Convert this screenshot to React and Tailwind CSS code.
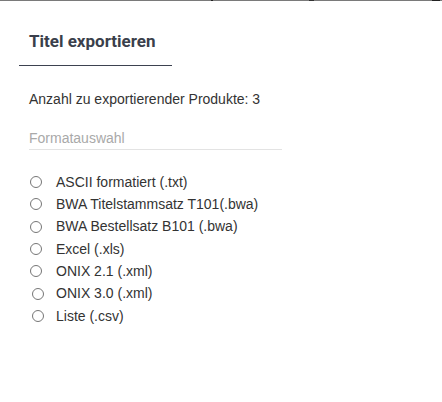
import React from 'react';

const formats = [
  { label: 'ASCII formatiert (.txt)', shift: false },
  { label: 'BWA Titelstammsatz T101(.bwa)', shift: false },
  { label: 'BWA Bestellsatz B101 (.bwa)', shift: false },
  { label: 'Excel (.xls)', shift: false },
  { label: 'ONIX 2.1 (.xml)', shift: false },
  { label: 'ONIX 3.0 (.xml)', shift: true },
  { label: 'Liste (.csv)', shift: true },
];

function Radio({ shift }) {
  return (
    <span
      className={`inline-block w-[12px] h-[12px] rounded-full border border-[#767676] bg-white shrink-0 ${
        shift ? 'ml-[2px] mr-[12px]' : 'mr-[14px]'
      }`}
    ></span>
  );
}

export default function App() {
  return (
    <div className="w-[442px] h-[402px] bg-white relative overflow-hidden font-['Liberation_Sans',Arial,sans-serif]">
      {/* top edge of the dialog frame */}
      <div className="h-px bg-[#7a7a7a] flex">
        <div className="w-[211px]"></div>
        <div className="w-[2px] bg-[#222]"></div>
        <div className="w-[96px]"></div>
        <div className="w-[5px] bg-[#333]"></div>
        <div className="w-[118px]"></div>
        <div className="w-[8px] bg-[#222]"></div>
      </div>

      <div className="pt-[30px]">
        <div className="ml-[19px] w-[153px] border-b border-[#3d4250] pb-[14px]">
          <h1 className="pl-[10px] text-[17px] leading-[20px] font-bold text-[#3a3f4b] font-['Roboto',sans-serif]">
            Titel exportieren
          </h1>
        </div>

        <div className="pl-[29px] pt-[25px] text-[14px] leading-[16px] text-[#333]">
          Anzahl zu exportierender Produkte: 3
        </div>

        <div className="ml-[29px] w-[253px] mt-[23px] border-b border-[#e3e3e3] pb-[2px] text-[14px] leading-[17px] text-[#a9a9a9]">
          Formatauswahl
        </div>

        <div className="pl-[30px] pt-[21px] flex flex-col">
          {formats.map((f) => (
            <label
              key={f.label}
              className="flex items-center h-[22.33px] text-[14px] text-[#333]"
            >
              <Radio shift={f.shift} />
              <span>{f.label}</span>
            </label>
          ))}
        </div>
      </div>
    </div>
  );
}
